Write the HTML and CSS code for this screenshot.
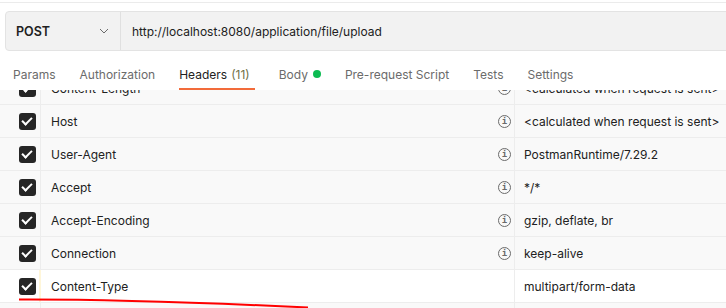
FILE: index.html
```html
<!DOCTYPE html>
<html lang="en">
<head>
  <meta charset="UTF-8" />
  <title>POST upload - Headers</title>
  <link rel="stylesheet" href="styles.css">
</head>
<body>
  <div class="request-pane">
    <div class="top-rule"></div>

    <!-- method + url -->
    <div class="url-bar">
      <div class="method">
        <span>POST</span>
        <svg class="chevron" width="10" height="6" viewBox="0 0 10 6"><path d="M1 1l4 4 4-4" fill="none" stroke="#6b6b6b" stroke-width="1"/></svg>
      </div>
      <div class="url">http://localhost:8080/application/file/upload</div>
    </div>

    <!-- request tabs -->
    <nav class="tabs">
      <a href="#">Params</a>
      <a href="#">Authorization</a>
      <a href="#" class="active">Headers <span class="count">(11)</span></a>
      <a href="#">Body <span class="dot"></span></a>
      <a href="#">Pre-request Script</a>
      <a href="#">Tests</a>
      <a href="#">Settings</a>
    </nav>

    <!-- headers table, scrolled a bit -->
    <div class="table-view">
      <div class="rows">
        <div class="row auto">
          <div class="cell check"><span class="box"></span></div>
          <div class="cell key">Content-Length<span class="info">i</span></div>
          <div class="cell value">&lt;calculated when request is sent&gt;</div>
        </div>
        <div class="row auto">
          <div class="cell check"><span class="box"></span></div>
          <div class="cell key">Host<span class="info">i</span></div>
          <div class="cell value">&lt;calculated when request is sent&gt;</div>
        </div>
        <div class="row auto">
          <div class="cell check"><span class="box"></span></div>
          <div class="cell key">User-Agent<span class="info">i</span></div>
          <div class="cell value">PostmanRuntime/7.29.2</div>
        </div>
        <div class="row auto">
          <div class="cell check"><span class="box"></span></div>
          <div class="cell key">Accept<span class="info">i</span></div>
          <div class="cell value">*/*</div>
        </div>
        <div class="row auto">
          <div class="cell check"><span class="box"></span></div>
          <div class="cell key">Accept-Encoding<span class="info">i</span></div>
          <div class="cell value">gzip, deflate, br</div>
        </div>
        <div class="row auto">
          <div class="cell check"><span class="box"></span></div>
          <div class="cell key">Connection<span class="info">i</span></div>
          <div class="cell value">keep-alive</div>
        </div>
        <div class="row user">
          <div class="cell check"><span class="box"></span></div>
          <div class="cell key">Content-Type</div>
          <div class="cell value">multipart/form-data</div>
        </div>
        <div class="row auto">
          <div class="cell check"></div>
          <div class="cell key"></div>
          <div class="cell value"></div>
        </div>
      </div>

      <!-- hand drawn mark -->
      <svg class="scribble" width="726" height="40" viewBox="0 0 726 40">
        <path d="M19 10.6 Q 130 10.2 308 18.5" fill="none" stroke="#ff0000" stroke-width="2"/>
      </svg>
    </div>
  </div>
</body>
</html>
```

FILE: styles.css
```css
* {
  margin: 0;
  padding: 0;
  box-sizing: border-box;
  font-family: 'Inter', 'Liberation Sans', sans-serif;
}
body {
  background: #fff;
  color: #212121;
  font-size: 12px;
  overflow: hidden;
}
.request-pane {
  width: 726px;
  height: 308px;
  overflow: hidden;
}
.top-rule {
  height: 3px;
  border-bottom: 1px solid #ebebeb;
  margin-bottom: 8px;
}
/* URL bar */
.url-bar {
  display: flex;
  height: 40px;
  margin-left: 5px;
  width: 760px;
  background: #f2f2f2;
  border: 1px solid #e3e3e3;
  border-radius: 4px;
}
.url-bar .method {
  width: 115px;
  display: flex;
  align-items: center;
  justify-content: space-between;
  padding: 0 11px 0 10px;
  border-right: 1px solid #e0e0e0;
  font-weight: 600;
  font-size: 12.5px;
  color: #212121;
}
.url-bar .url {
  display: flex;
  align-items: center;
  padding-left: 11px;
  color: #212121;
}
/* Tabs */
.tabs {
  display: flex;
  height: 39px;
  padding-left: 13px;
  gap: 24px;
  position: relative;
  z-index: 1;
  background: #fff;
}
.tabs a {
  display: flex;
  align-items: center;
  gap: 5px;
  text-decoration: none;
  color: #6b6b6b;
  padding-top: 9px;
  border-bottom: 2px solid transparent;
}
.tabs a.active {
  color: #212121;
  border-bottom-color: #f26b3a;
  padding-right: 5px;
}
.tabs a .count {
  color: #6f7046;
  margin-left: -1px;
}
.tabs a .dot {
  width: 8px;
  height: 8px;
  border-radius: 50%;
  background: #0cbb52;
}
/* Headers table */
.table-view {
  position: relative;
  height: 218px;
  overflow: hidden;
}
.rows {
  margin-top: -18px;
}
.row {
  display: grid;
  grid-template-columns: 41px 474px 1fr;
  height: 33px;
  border-bottom: 1px solid #ededed;
}
.row.auto {
  background: #f9f9f9;
}
.row.user {
  background: #fff;
}
.cell {
  display: flex;
  align-items: center;
  border-right: 1px solid #ededed;
}
.cell.check {
  padding-left: 19px;
}
.row.user .cell.check {
  border-right: 2px solid #fff6d9;
}
.cell.key {
  justify-content: space-between;
  padding: 0 3px 0 10px;
}
.cell.value {
  padding-left: 9px;
  border-right: none;
  white-space: nowrap;
}
.box {
  width: 17px;
  height: 17px;
  border-radius: 3px;
  background: #262626;
  position: relative;
}
.box::after {
  content: '';
  position: absolute;
  left: 5px;
  top: 2px;
  width: 4px;
  height: 8px;
  border: solid #fff;
  border-width: 0 2.5px 2.5px 0;
  transform: rotate(45deg);
}
.info {
  width: 13px;
  height: 13px;
  border: 1px solid #6b6b6b;
  border-radius: 50%;
  color: #6b6b6b;
  font-size: 9px;
  font-weight: 600;
  line-height: 11px;
  text-align: center;
  font-family: 'DejaVu Sans Mono', monospace;
}
.scribble {
  position: absolute;
  left: 0;
  top: 199px;
}
```
